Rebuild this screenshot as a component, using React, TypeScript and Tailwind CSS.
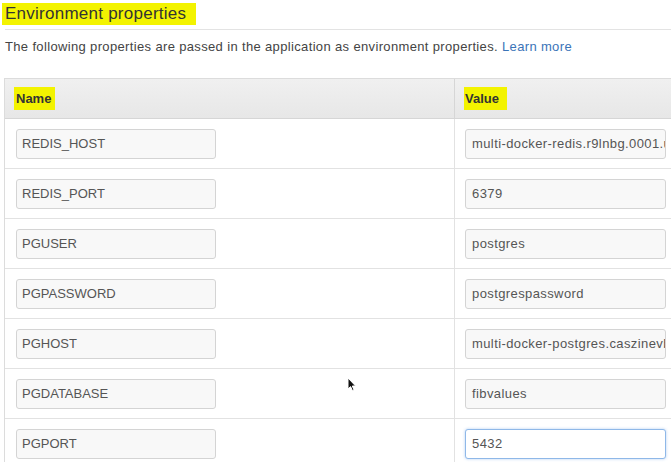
import React from 'react';

const rows: { name: string; value: string; focused?: boolean }[] = [
  { name: 'REDIS_HOST', value: 'multi-docker-redis.r9lnbg.0001.use1.cache.amazonaws.com' },
  { name: 'REDIS_PORT', value: '6379' },
  { name: 'PGUSER', value: 'postgres' },
  { name: 'PGPASSWORD', value: 'postgrespassword' },
  { name: 'PGHOST', value: 'multi-docker-postgres.caszinevb1mq.us-east-1.rds.amazonaws.com' },
  { name: 'PGDATABASE', value: 'fibvalues' },
  { name: 'PGPORT', value: '5432', focused: true },
];

const Field: React.FC<{ value: string; focused?: boolean; wide?: boolean }> = ({ value, focused, wide }) => (
  <div
    className={`h-[30px] rounded-[3px] border flex items-center overflow-hidden whitespace-nowrap text-[13px] text-[#555] ${
      wide ? 'w-[201px] pl-[6px] tracking-[0.4px]' : 'w-[200px] pl-[5px]'
    } ${
      focused
        ? 'bg-white border-[#8fb8e8] shadow-[0_0_3px_rgba(82,148,230,0.45)]'
        : 'bg-[#f8f8f8] border-[#d4d4d4]'
    }`}
  >
    {value}
  </div>
);

export default function App() {
  return (
    <div className="relative w-[671px] h-[462px] overflow-hidden bg-white font-['Liberation_Sans',Arial,sans-serif]">
      <div className="pl-[5px] pt-[3px]">
        <h2 className="h-[21px] flex items-center text-[17px] tracking-[0.25px] leading-none text-[#333]">
          <span className="bg-[#f3f300] -ml-[3px] pl-[3px] pr-[10px] pt-[2px] pb-[3px]">Environment properties</span>
        </h2>
        <div className="mt-[5px] border-t border-[#e3e3e3]" />
        <p className="mt-[9px] text-[13px] tracking-[0.35px] text-[#444] leading-[16px]">
          The following properties are passed in the application as environment properties.{' '}
          <span className="text-[#3b74b8]">Learn more</span>
        </p>
      </div>

      <div className="mt-[23px] ml-[4px] w-[720px] border-l border-t border-[#dcdcdc]">
        <div className="flex h-[40px] bg-gradient-to-b from-[#f0f0f0] to-[#e7e7e7] border-b border-[#d6d6d6]">
          <div className="w-[450px] pl-[9px] flex items-center border-r border-[#d6d6d6]">
            <span className="bg-[#f3f300] text-[13px] font-bold text-[#333] pl-[2px] pr-[4px] py-[2px]">Name</span>
          </div>
          <div className="flex-1 pl-[9px] flex items-center">
            <span className="bg-[#f3f300] text-[13px] font-bold text-[#333] pl-[1px] pr-[8px] py-[2px]">Value</span>
          </div>
        </div>
        {rows.map((r) => (
          <div key={r.name} className="flex h-[50px] border-b border-[#e2e2e2]">
            <div className="w-[450px] pl-[11px] pt-[10px] border-r border-[#e2e2e2]">
              <Field value={r.name} />
            </div>
            <div className="flex-1 pl-[10px] pt-[10px]">
              <Field value={r.value} focused={r.focused} wide />
            </div>
          </div>
        ))}
      </div>

      <svg className="absolute left-[347px] top-[377px]" width="10" height="15" viewBox="0 0 10 15">
        <path d="M1 1 L1 12 L3.6 9.6 L5.4 13.6 L7 12.9 L5.3 9 L8.6 9 Z" fill="#111" stroke="#fff" strokeWidth="1" />
      </svg>
    </div>
  );
}
